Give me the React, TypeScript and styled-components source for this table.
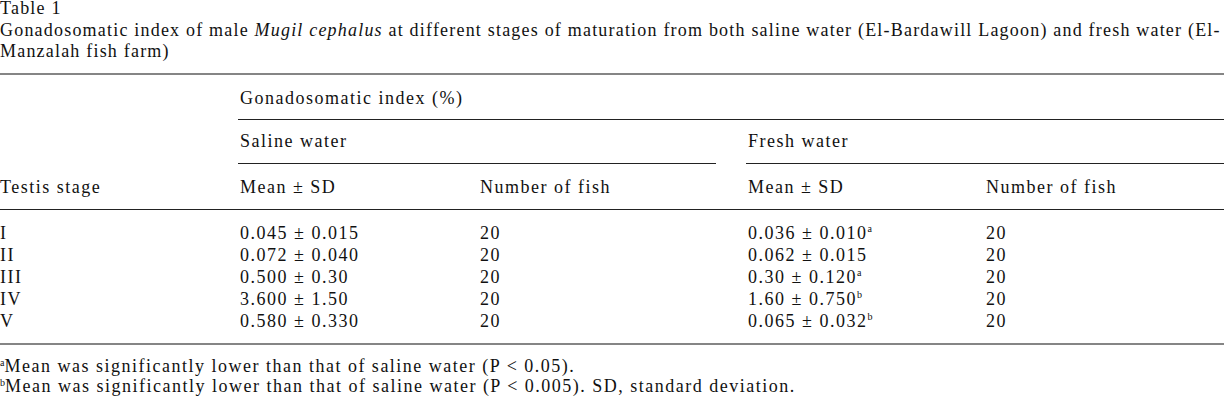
import React from "react";
import styled, { createGlobalStyle } from "styled-components";

const Global = createGlobalStyle`
  html, body { margin: 0; padding: 0; background: #fff; }
  body {
    font-family: "Liberation Serif", "Times New Roman", serif;
    color: #111;
    font-size: 18px;
    letter-spacing: 1.5px;
  }
`;

const Page = styled.div`
  width: 1224px;
`;

const Caption = styled.div`
  margin-top: -2px;
  line-height: 21.5px;
  padding-bottom: 10px;
  letter-spacing: 1.2px;
  white-space: nowrap;
`;

const Grid = styled.div`
  display: grid;
  grid-template-columns: 238px 240px 238px 30px 238px 240px;
  border-top: 2px solid #858585;
  border-bottom: 2px solid #858585;
`;

const Cell = styled.div<{ $span?: string; $pt: number; $pb: number; $rule?: boolean; $flush?: boolean }>`
  grid-column: ${(p) => p.$span || "auto"};
  padding: ${(p) => p.$pt}px 0 ${(p) => p.$pb}px ${(p) => (p.$flush ? 0 : 2)}px;
  line-height: 20px;
  white-space: nowrap;
  border-bottom: ${(p) => (p.$rule ? "1px solid #222" : "1px solid transparent")};
`;

const HeadRow = styled.div`
  grid-column: 1 / -1;
  display: grid;
  grid-template-columns: subgrid;
  border-bottom: 1px solid #222;
`;

const Body = styled.div`
  grid-column: 1 / -1;
  display: grid;
  grid-template-columns: subgrid;
  padding: 12px 0 11px;
`;

const DataCell = styled.div<{ $col: number; $flush?: boolean }>`
  grid-column: ${(p) => p.$col};
  line-height: 22px;
  padding-left: ${(p) => (p.$flush ? 0 : 2)}px;
  white-space: nowrap;
`;

const Sup = styled.sup`
  font-size: 10px;
  letter-spacing: 0;
  vertical-align: 0;
  position: relative;
  top: -7px;
  line-height: 0;
`;

const Notes = styled.div`
  padding-top: 11px;
  line-height: 20px;
  white-space: nowrap;
`;

const NoteSup = styled(Sup)`
  top: -6px;
`;

type Row = { stage: string; s: string; f: string; fsup?: string };

const rows: Row[] = [
  { stage: "I", s: "0.045 ± 0.015", f: "0.036 ± 0.010", fsup: "a" },
  { stage: "II", s: "0.072 ± 0.040", f: "0.062 ± 0.015" },
  { stage: "III", s: "0.500 ± 0.30", f: "0.30 ± 0.120", fsup: "a" },
  { stage: "IV", s: "3.600 ± 1.50", f: "1.60 ± 0.750", fsup: "b" },
  { stage: "V", s: "0.580 ± 0.330", f: "0.065 ± 0.032", fsup: "b" },
];

export default function App() {
  return (
    <Page>
      <Global />
      <Caption>
        Table 1
        <br />
        Gonadosomatic index of male <i>Mugil cephalus</i> at different stages of maturation from both saline water
        (El-Bardawill Lagoon) and fresh water (El-
        <br />
        Manzalah fish farm)
      </Caption>
      <Grid>
        <Cell $span="2 / -1" $pt={13} $pb={11} $rule>
          Gonadosomatic index (%)
        </Cell>
        <Cell $span="2 / 4" $pt={11} $pb={12} $rule>
          Saline water
        </Cell>
        <Cell $span="5 / 7" $pt={11} $pb={12} $rule>
          Fresh water
        </Cell>
        <HeadRow>
          <Cell $pt={13} $pb={11} $flush>Testis stage</Cell>
          <Cell $pt={13} $pb={11}>Mean ± SD</Cell>
          <Cell $pt={13} $pb={11}>Number of fish</Cell>
          <Cell $pt={13} $pb={11} />
          <Cell $pt={13} $pb={11}>Mean ± SD</Cell>
          <Cell $pt={13} $pb={11}>Number of fish</Cell>
        </HeadRow>
        <Body>
          {rows.map((r) => (
            <React.Fragment key={r.stage}>
              <DataCell $col={1} $flush>{r.stage}</DataCell>
              <DataCell $col={2}>{r.s}</DataCell>
              <DataCell $col={3}>20</DataCell>
              <DataCell $col={5}>
                {r.f}
                {r.fsup && <Sup>{r.fsup}</Sup>}
              </DataCell>
              <DataCell $col={6}>20</DataCell>
            </React.Fragment>
          ))}
        </Body>
      </Grid>
      <Notes>
        <NoteSup>a</NoteSup>Mean was significantly lower than that of saline water (P &lt; 0.05).
        <br />
        <NoteSup>b</NoteSup>Mean was significantly lower than that of saline water (P &lt; 0.005). SD, standard
        deviation.
      </Notes>
    </Page>
  );
}
